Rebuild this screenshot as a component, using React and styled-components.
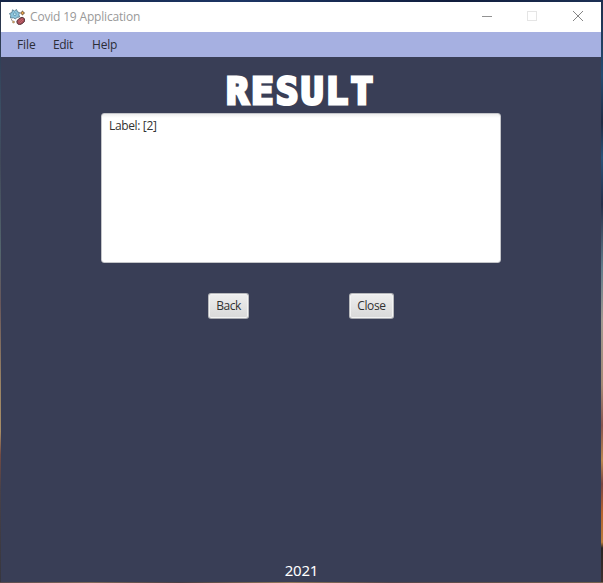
import React from "react";
import styled, { createGlobalStyle } from "styled-components";

const GlobalStyle = createGlobalStyle`
  * { box-sizing: border-box; }
  body { margin: 0; overflow: hidden; }
`;

const Desktop = styled.div`
  width: 603px;
  height: 583px;
  padding: 2px 2px 1px 1px;
  background:
    linear-gradient(90deg, #142547, #1c3564 40%, #101d3d 75%, #1c3054) top / 100% 2px no-repeat,
    linear-gradient(90deg, #594b50, #806759 15%, #4a3d43 30%, #94785a 48%, #55454a 65%, #75604f) bottom / 100% 1px no-repeat,
    linear-gradient(#263149, #3c5065 20%, #404859 28%, #53656d 43%, #67565a 52%, #9a8465 66%, #a88d66 74%, #714942 78%, #474149 84%, #37363e) left / 1px 100% no-repeat,
    linear-gradient(#1f2e4b, #234c72 13%, #202b43 21%, #29547a 27%, #252e49 35%, #627d8b 46%, #a19a91 55%, #a58a75 66%, #87554e 73%, #bb874f 79%, #784541 83%, #b6632e 88%, #b87c3c 93%, #292423 94%, #3e302f) right / 2px 100% no-repeat;
  font-family: "Open Sans", "Noto Sans", sans-serif;
`;

const Window = styled.main`
  height: 580px;
  display: flex;
  flex-direction: column;
  background: #393e56;
`;

const TitleBar = styled.header`
  height: 30px;
  flex: none;
  display: flex;
  align-items: center;
  background: #fff;
  padding-left: 8px;
`;

const Fitted = styled.span`
  display: block;
  white-space: nowrap;
  font-size: 12px;
  line-height: 16px;
  letter-spacing: ${(p) => p.$track || 0}px;
`;

const WindowTitle = styled(Fitted)`
  margin-left: 5px;
  color: #999;
  flex: 1;
`;

const Controls = styled.div`
  display: flex;
  svg { display: block; }
`;

const MenuBar = styled.nav`
  height: 25px;
  flex: none;
  display: flex;
  align-items: center;
  padding-left: 16px;
  background: #a6b0e1;
  color: #2b2d35;
`;

const MenuItem = styled.div`
  width: ${(p) => p.$width}px;
`;

const Content = styled.section`
  flex: 1;
  display: flex;
  flex-direction: column;
  align-items: center;
`;

const Heading = styled.h1`
  margin: 13px 0 0;
  height: 43px;
  color: #fff;
  font: bold 37px/43px "DejaVu Sans Mono", monospace;
  letter-spacing: 2.6px;
  -webkit-text-stroke: 3.2px #fff;
`;

const ResultArea = styled.div`
  width: 400px;
  height: 150px;
  padding: 4px 7px;
  border: 1px solid #c4c5c9;
  border-radius: 3px;
  background: linear-gradient(#ededed, #fff 4px);
  color: #323232;
`;

const Actions = styled.div`
  display: flex;
  width: 186px;
  justify-content: space-between;
  margin-top: 30px;
`;

const Button = styled.button`
  width: ${(p) => p.$width}px;
  height: 26px;
  display: flex;
  align-items: center;
  justify-content: center;
  padding: 0;
  border: 1px solid #b8b9bc;
  border-bottom-color: #a7a9af;
  border-radius: 3px;
  background: linear-gradient(#eee, #d9d9d9);
  box-shadow: inset 0 0 0 1px #f3f3f3;
  font-family: inherit;
  color: #323232;
`;

const Footer = styled.footer`
  margin-top: auto;
  height: 22px;
  padding-left: 1px;
  color: #fff;
  font: 15px/20px "Noto Sans", sans-serif;
  letter-spacing: -0.2px;
`;

function VirusIcon() {
  return (
    <svg width="16" height="16" viewBox="0 0 16 16">
      <path
        d="M3.5.8L5.5 2l2-1.5L8.5 3l2 .5-.6 2.2.6 2.3-2.6.3L6.5 10 4.5 8.8 1.5 9l.2-2.5L.5 4.5l2.5-1z"
        fill="#8cc5de"
        stroke="#5b7f90"
        strokeWidth=".9"
      />
      <circle cx="5.8" cy="5.2" r="1.4" fill="#bce5f2" stroke="#477990" strokeWidth=".6" />
      <path d="M2 10.5l1.5 1" stroke="#766c61" />
      <path d="M13.5 1.5v5M11 4h5" stroke="#a08c78" strokeWidth=".9" />
      <circle cx="13.5" cy="4" r="1.5" fill="#eca849" stroke="#5d4938" strokeWidth=".7" />
      <ellipse cx="11.8" cy="12" rx="4.3" ry="3" transform="rotate(-35 11.8 12)" fill="#a94f59" stroke="#583a40" strokeWidth=".9" />
      <path d="M9.5 13l4-3.5M11 14l3-3" stroke="#cf7178" strokeWidth=".7" />
      <circle cx="4.5" cy="13" r="1.1" fill="#d4a35b" stroke="#746451" strokeWidth=".4" />
    </svg>
  );
}

function ControlIcons() {
  return (
    <svg width="138" height="30" viewBox="0 0 138 30" fill="none">
      <path d="M19 14.5h10" stroke="#929292" />
      <rect x="64.5" y="9.5" width="9" height="9" stroke="#e5e5e5" />
      <path d="M110 9l10 10M120 9l-10 10" stroke="#858585" />
    </svg>
  );
}

export default function App() {
  return (
    <Desktop>
      <GlobalStyle />
      <Window>
        <TitleBar>
          <VirusIcon />
          <WindowTitle $track={-0.18}>Covid 19 Application</WindowTitle>
          <Controls><ControlIcons /></Controls>
        </TitleBar>
        <MenuBar>
          <MenuItem $width={36}><Fitted $track={-0.1}>File</Fitted></MenuItem>
          <MenuItem $width={39}><Fitted $track={-0.35}>Edit</Fitted></MenuItem>
          <MenuItem $width={40}><Fitted $track={-0.2}>Help</Fitted></MenuItem>
        </MenuBar>
        <Content>
          <Heading>RESULT</Heading>
          <ResultArea><Fitted $track={-0.35}>Label: [2]</Fitted></ResultArea>
          <Actions>
            <Button $width={41}><Fitted $track={-0.5}>Back</Fitted></Button>
            <Button $width={45}><Fitted $track={-0.35}>Close</Fitted></Button>
          </Actions>
          <Footer>2021</Footer>
        </Content>
      </Window>
    </Desktop>
  );
}
